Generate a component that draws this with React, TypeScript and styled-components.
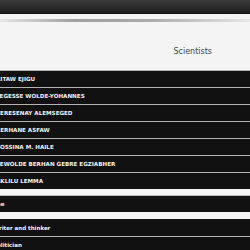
import React from "react";
import styled, { createGlobalStyle } from "styled-components";

const Global = createGlobalStyle`
  html, body {
    margin: 0;
    padding: 0;
    background: #f4f4f4;
    overflow: hidden;
  }
`;

const scientists = [
  "Kitaw Ejigu",
  "Legesse Wolde-Yohannes",
  "Zeresenay Alemseged",
  "Berhane Asfaw",
  "Sossina M. Haile",
  "Tewolde Berhan Gebre Egziabher",
  "Aklilu Lemma",
];

export default function App() {
  return (
    <Root>
      <Global />
      <TopBar />
      <Shadow />
      <Heading>
        <div className="title">Scientists</div>
      </Heading>
      <List>
        {scientists.map((n) => (
          <Row key={n}>{n}</Row>
        ))}
      </List>
      <List $gap>
        <Row $plain>The</Row>
      </List>
      <List>
        <Row $plain $flat>Writer and thinker</Row>
        <Row $plain>Politician</Row>
      </List>
    </Root>
  );
}

const Root = styled.div`
  width: 250px;
  height: 250px;
  overflow: hidden;
  background: #f4f4f4;
  font-family: "DejaVu Sans", Verdana, sans-serif;
`;

const TopBar = styled.div`
  height: 13px;
  background: linear-gradient(#3c3c3c, #1e1e1e);
  border-bottom: 1px solid #111;
`;

const Shadow = styled.div`
  height: 3px;
  margin-top: 5px;
  background: linear-gradient(
    to right,
    rgba(0, 0, 0, 0.05),
    rgba(0, 0, 0, 0.35) 30%,
    rgba(0, 0, 0, 0.3) 60%,
    rgba(0, 0, 0, 0.05)
  );
  filter: blur(0.6px);
`;

const Heading = styled.div`
  height: 48px;
  display: flex;
  align-items: center;
  justify-content: flex-end;
  padding-right: 38px;
  .title {
    font-family: "DejaVu Sans", sans-serif;
    font-size: 8px;
    color: #444;
    margin-top: 10px;
  }
`;

const List = styled.div<{ $gap?: boolean }>`
  display: flex;
  flex-direction: column;
  margin-top: ${(p) => (p.$gap ? "6px" : "0")};
  margin-bottom: ${(p) => (p.$gap ? "7px" : "0")};
`;

const Row = styled.div<{ $plain?: boolean; $flat?: boolean }>`
  height: 16px;
  border-top: 1px solid ${(p) => (p.$flat ? "#161616" : "#b4b4b4")};
  background: #111;
  color: #f2f2f2;
  font-weight: bold;
  font-size: ${(p) => (p.$plain ? "5.5px" : "5.6px")};
  text-transform: ${(p) => (p.$plain ? "none" : "uppercase")};
  line-height: 16px;
  white-space: nowrap;
  text-indent: ${(p) => (p.$plain ? "-7px" : "-4px")};
`;
